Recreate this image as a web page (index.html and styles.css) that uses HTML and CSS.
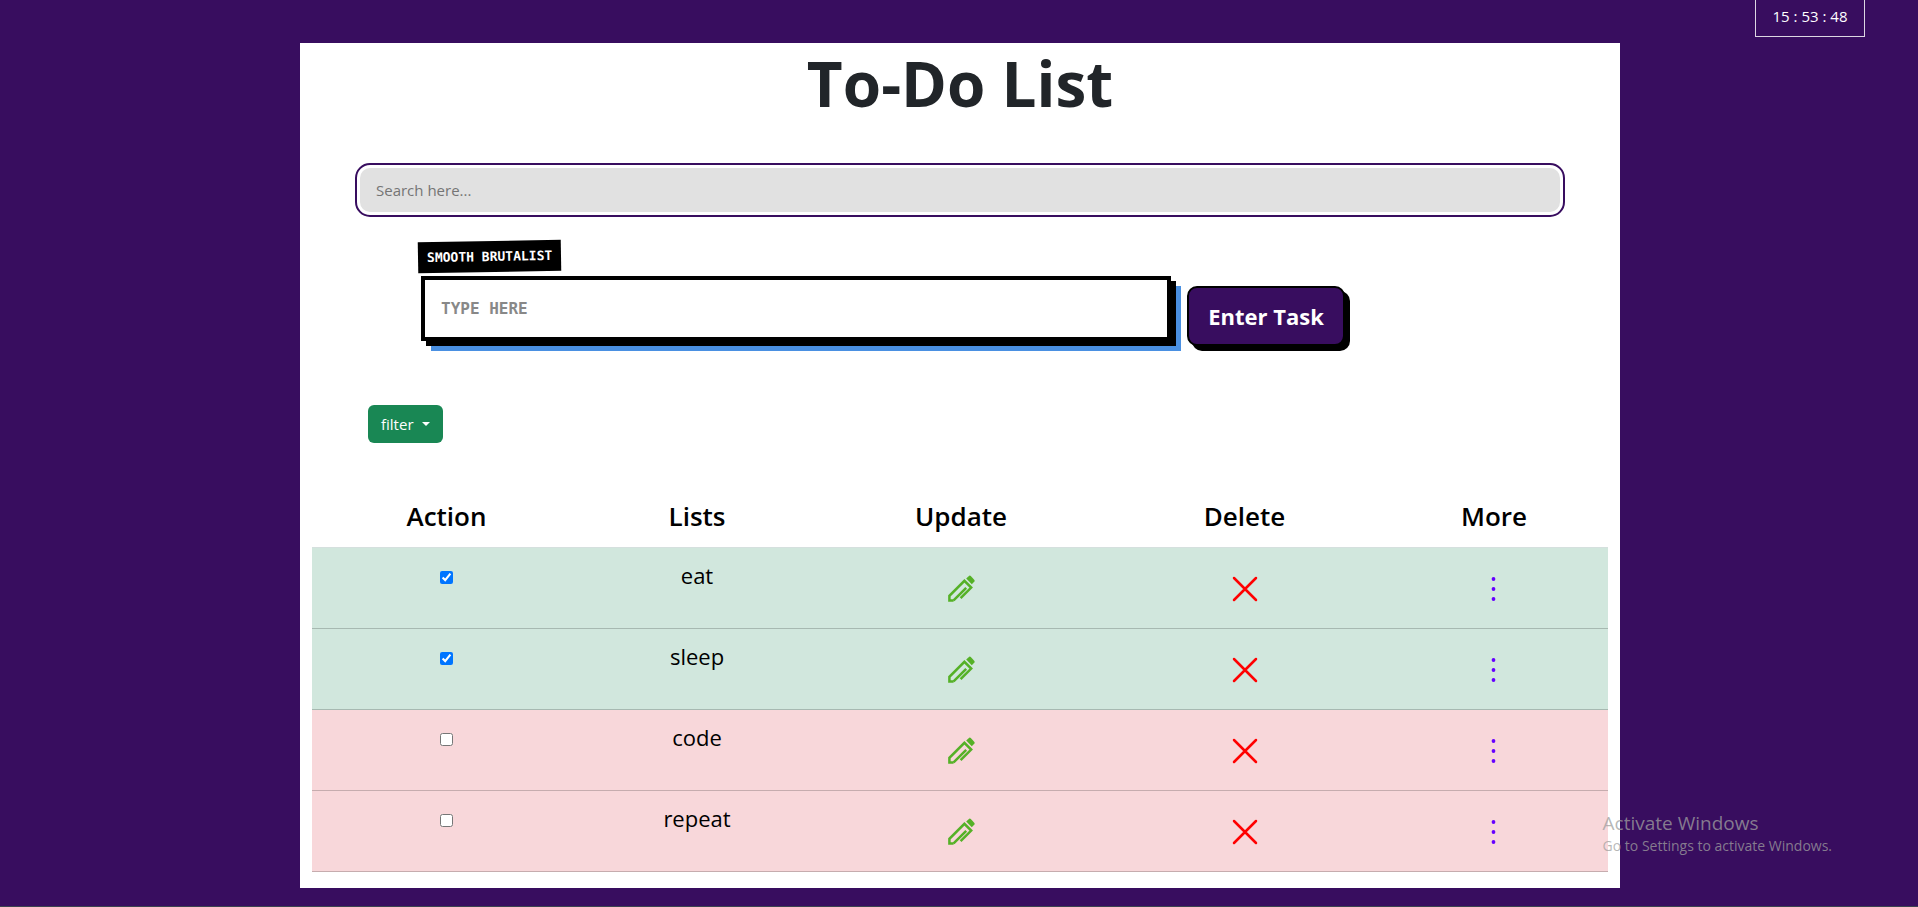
FILE: index.html
```html
<!DOCTYPE html>
<html lang="en">
<head>
<meta charset="utf-8">
<title>To-Do List</title>
<link rel="stylesheet" href="styles.css">
</head>
<body>
<svg class="sprite" aria-hidden="true">
  <symbol id="pencil" viewBox="0 0 32 32"><path fill="none" stroke="currentColor" stroke-width="2.5" d="M8.6 27.4H4.4V22.8L19.4 7.8L26.2 14.6L15.6 25.2M8.6 27.4L21.2 14.8"/><path fill="currentColor" d="M21.2 5.6L24.2 2.8Q25 2.2 25.8 3L29.4 7Q30 7.8 29.4 8.6L26.8 11.2Z"/></symbol>
  <symbol id="cross" viewBox="0 0 32 32"><path fill="none" stroke="currentColor" stroke-width="2.5" stroke-linecap="round" d="M5 5L27 27M27 5L5 27"/></symbol>
  <symbol id="dots" viewBox="0 0 32 32"><g fill="currentColor"><circle cx="15.5" cy="6" r="1.9"/><circle cx="15.5" cy="16" r="1.9"/><circle cx="15.5" cy="26" r="1.9"/></g></symbol>
</svg>
<header class="topbar"><time class="clock">15 : 53 : 48</time></header>
<main class="card">
  <h1 class="title">To-Do List</h1>
  <input class="search" type="search" placeholder="Search here..." aria-label="Search">
  <form class="entry">
    <div class="field">
      <label class="tag" for="task">SMOOTH BRUTALIST</label>
      <input class="task" id="task" type="text" placeholder="TYPE HERE">
    </div>
    <button class="enter" type="button">Enter Task</button>
  </form>
  <button class="filter" type="button">filter <span class="caret"></span></button>
  <table class="tasks">
    <colgroup><col class="c-action"><col class="c-list"><col class="c-update"><col class="c-delete"><col class="c-more"></colgroup>
    <thead>
      <tr><th>Action</th><th>Lists</th><th>Update</th><th>Delete</th><th>More</th></tr>
    </thead>
    <tbody>
      <tr class="done">
        <td><input class="check" type="checkbox" aria-label="eat" checked></td><td>eat</td>
        <td><button class="icon update" type="button" aria-label="Update"><svg><use href="#pencil"/></svg></button></td>
        <td><button class="icon delete" type="button" aria-label="Delete"><svg><use href="#cross"/></svg></button></td>
        <td><button class="icon more" type="button" aria-label="More"><svg><use href="#dots"/></svg></button></td>
      </tr>
      <tr class="done">
        <td><input class="check" type="checkbox" aria-label="sleep" checked></td><td>sleep</td>
        <td><button class="icon update" type="button" aria-label="Update"><svg><use href="#pencil"/></svg></button></td>
        <td><button class="icon delete" type="button" aria-label="Delete"><svg><use href="#cross"/></svg></button></td>
        <td><button class="icon more" type="button" aria-label="More"><svg><use href="#dots"/></svg></button></td>
      </tr>
      <tr class="open">
        <td><input class="check" type="checkbox" aria-label="code"></td><td>code</td>
        <td><button class="icon update" type="button" aria-label="Update"><svg><use href="#pencil"/></svg></button></td>
        <td><button class="icon delete" type="button" aria-label="Delete"><svg><use href="#cross"/></svg></button></td>
        <td><button class="icon more" type="button" aria-label="More"><svg><use href="#dots"/></svg></button></td>
      </tr>
      <tr class="open">
        <td><input class="check" type="checkbox" aria-label="repeat"></td><td>repeat</td>
        <td><button class="icon update" type="button" aria-label="Update"><svg><use href="#pencil"/></svg></button></td>
        <td><button class="icon delete" type="button" aria-label="Delete"><svg><use href="#cross"/></svg></button></td>
        <td><button class="icon more" type="button" aria-label="More"><svg><use href="#dots"/></svg></button></td>
      </tr>
    </tbody>
  </table>
</main>
<aside class="watermark">
  <p class="wm-title">Activate Windows</p>
  <p class="wm-text">Go to Settings to activate Windows.</p>
</aside>
</body>
</html>
```
FILE: styles.css
```css
* { box-sizing: border-box; }
body {
  margin: 0;
  padding-left: 2px;
  min-height: 100vh;
  background: #380d5f;
  border-bottom: 1px solid #3b4350;
  color: #212529;
  font: 15px/24px "Segoe UI", "Open Sans", "Noto Sans", sans-serif;
}
.sprite { display: none; }
.topbar { display: flex; justify-content: flex-end; height: 43px; padding-right: 53px; }
.clock {
  width: 110px;
  height: 37px;
  padding-top: 4px;
  border: 1px solid #dcd6e2;
  border-top: 0;
  color: #fff;
  text-align: center;
}
.card {
  display: flex;
  flex-direction: column;
  max-width: 1320px;
  margin: 0 auto;
  padding: 0 12px 16px;
  background: #fff;
}
.title { margin: 0; padding-bottom: 3px; font-size: 62px; line-height: 80px; font-weight: 700; text-align: center; }
.search {
  height: 44px;
  margin: 42px 48px 0;
  padding: 0 16px;
  border: 0;
  border-radius: 10px;
  outline: 2px solid #380d5f;
  outline-offset: 3px;
  background: #e1e1e1;
  font: inherit;
}
.search::placeholder { color: #757575; }
.entry { display: flex; align-items: flex-end; gap: 16px; margin: 29px 0 0 109px; }
.field { display: flex; flex-direction: column; align-items: flex-start; flex: 0 1 750px; margin-bottom: 5px; }
.tag {
  margin: 0 0 4px -3px;
  padding: 4px 9px;
  background: #000;
  color: #fff;
  font: bold 13px/23px "DejaVu Sans Mono", monospace;
  transform: rotate(-1deg);
}
.task {
  width: 100%;
  height: 65px;
  padding: 0 16px;
  border: 4px solid #000;
  border-radius: 0;
  box-shadow: 5px 5px 0 #000, 10px 10px 0 #4a90e2;
  background: #fff;
  font: bold 16px "DejaVu Sans Mono", monospace;
}
.task::placeholder { color: #888; }
.enter {
  width: 158px;
  height: 60px;
  padding: 0;
  border: 2px solid #000;
  border-radius: 10px;
  box-shadow: 5px 5px 0 #000;
  background: #380d5f;
  color: #fff;
  font: bold 22px "Segoe UI", "Open Sans", "Noto Sans", sans-serif;
}
.filter {
  display: flex;
  align-items: center;
  align-self: flex-start;
  gap: 8px;
  height: 38px;
  margin: 59px 0 0 56px;
  padding: 0 13px;
  border: 0;
  border-radius: 6px;
  background: #198754;
  color: #fff;
  font: inherit;
}
.caret { border: 4px solid transparent; border-top-color: #fff; border-bottom: 0; }
.tasks { width: 100%; margin-top: 47px; border-collapse: collapse; table-layout: fixed; color: #000; text-align: center; }
.c-action { width: 269px; }
.c-list { width: 232px; }
.c-update { width: 296px; }
.c-delete { width: 271px; }
.c-more { width: 228px; }
.tasks th { height: 57px; padding: 0 0 4px; border-bottom: 1px solid #d5e0de; font-size: 26px; line-height: 36px; font-weight: 600; }
.tasks td { height: 81px; padding: 9px 0 0; vertical-align: top; font-size: 22px; line-height: 36px; }
.done td { background: #d1e7dd; border-bottom: 1px solid #a7b9b1; }
.open td { background: #f8d7da; border-bottom: 1px solid #c6acae; }
.check { display: block; width: 13px; height: 13px; margin: 14px auto 0; }
.icon { display: block; width: 32px; height: 32px; margin: 16px auto 0; padding: 0; border: 0; background: none; }
.icon svg { display: block; width: 32px; height: 32px; }
.update { color: #55b127; }
.delete { color: #f00; }
.more { color: #60f; }
.watermark { position: absolute; right: 86px; bottom: 50px; color: rgba(160, 160, 160, 0.75); }
.watermark p { margin: 0; }
.wm-title { font-size: 19px; line-height: 24px; }
.wm-text { font-size: 14px; line-height: 22px; }
```
